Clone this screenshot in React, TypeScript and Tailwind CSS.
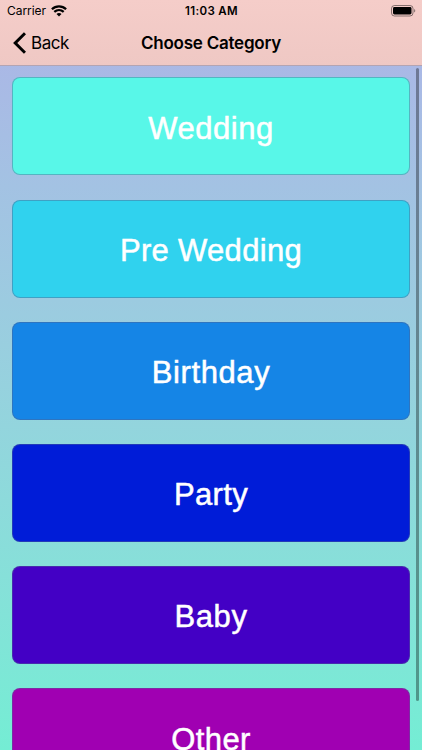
interface Category {
  name: string;
  color: string;
  textClass: string;
}

const CATEGORIES: Category[] = [
  { name: "Wedding", color: "bg-[#58f7e8]", textClass: "tracking-[0.55px]" },
  { name: "Pre Wedding", color: "bg-[#30d2ee]", textClass: "tracking-[0.3px]" },
  { name: "Birthday", color: "bg-[#1585e6]", textClass: "tracking-[0.6px]" },
  { name: "Party", color: "bg-[#001cd8]", textClass: "tracking-[0.35px]" },
  { name: "Baby", color: "bg-[#4300c5]", textClass: "tracking-[0.6px]" },
  { name: "Other", color: "bg-[#a000b2]", textClass: "tracking-[0.4px]" },
];

function WifiIcon() {
  return (
    <svg width="16" height="12" viewBox="0 0 16 12" fill="none" stroke="#000" strokeWidth="2.2">
      <path d="M0.9 4.3C4.8 0.3 11.2 0.3 15.1 4.3" />
      <path d="M3.3 6.9C6 4.4 10 4.4 12.7 6.9" />
      <path d="M5.5 8.9C6.9 7.6 9.1 7.6 10.5 8.9L8 11.5Z" fill="#000" stroke="none" />
    </svg>
  );
}

function BatteryIcon() {
  return (
    <svg width="25" height="12" viewBox="0 0 25 12">
      <rect x="0.5" y="0.5" width="21.5" height="10.5" rx="3" fill="none" stroke="#000" strokeOpacity="0.45" />
      <rect x="2" y="2" width="18.5" height="7.5" rx="1.4" />
      <path d="M23.2 4V7.6C24.6 7 24.6 4.6 23.2 4Z" fillOpacity="0.5" />
    </svg>
  );
}

function StatusBar() {
  return (
    <div className="grid h-[22px] grid-cols-3 items-center pl-[7px] pr-[6px] font-[Inter,sans-serif] text-[12px]">
      <div className="flex items-center gap-[5px]">
        <span className="w-[39px] whitespace-nowrap tracking-[-0.05px]">Carrier</span>
        <WifiIcon />
      </div>
      <span className="pt-[2px] text-center text-[11.5px] font-semibold tracking-[0.35px]">11:03 AM</span>
      <div className="flex justify-end">
        <BatteryIcon />
      </div>
    </div>
  );
}

function NavBar() {
  return (
    <div className="grid h-[43px] grid-cols-[1fr_auto_1fr] items-center px-[13px] font-[Inter,sans-serif] text-[17px]">
      <button className="flex items-center gap-[5px] tracking-[-0.45px]">
        <svg className="mb-[2px]" width="13" height="22" viewBox="0 0 13 22" fill="none" stroke="#000" strokeWidth="3">
          <path d="M12 1.2L2.2 11L12 20.8" />
        </svg>
        Back
      </button>
      <h1 className="font-semibold tracking-[-0.22px]">Choose Category</h1>
    </div>
  );
}

function CategoryCard({ name, color, textClass }: Category) {
  return (
    <button
      className={`flex h-[98px] w-full shrink-0 items-center justify-center rounded-[8px] border border-[#50629070] ${color}`}
    >
      <span
        className={`pt-[3.4px] font-['Liberation_Sans',sans-serif] text-[31px] leading-none text-white [-webkit-text-stroke:0.5px_white] ${textClass}`}
      >
        {name}
      </span>
    </button>
  );
}

export default function App() {
  return (
    <div className="flex h-[750px] w-[422px] flex-col overflow-hidden bg-linear-to-b from-[#adb3e7] to-[#74edd4] text-black">
      <header className="h-[66px] shrink-0 border-b border-[#b3a4b3] bg-linear-to-b from-[#f5cdc9] to-[#efc8c4]">
        <StatusBar />
        <NavBar />
      </header>
      <main className="relative min-h-0 flex-1 overflow-hidden">
        <div className="flex flex-col gap-[24.2px] px-[12.4px] pt-[11.4px]">
          {CATEGORIES.map((category) => (
            <CategoryCard key={category.name} {...category} />
          ))}
        </div>
        <div className="absolute right-[3px] top-[2px] h-[633px] w-[3px] rounded-full bg-black/35" />
      </main>
    </div>
  );
}
